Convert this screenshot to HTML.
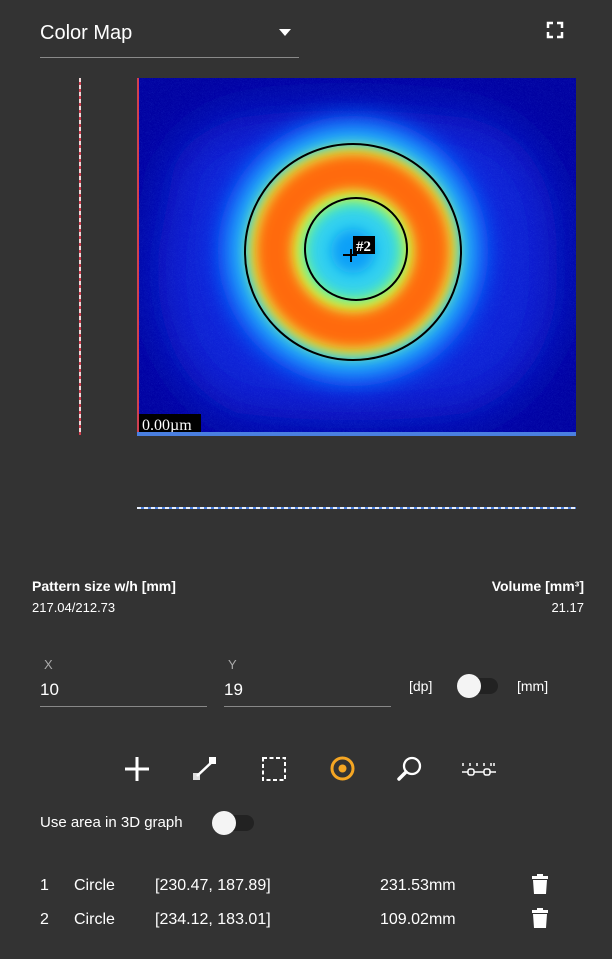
<!DOCTYPE html>
<html><head><meta charset="utf-8"><style>
body{margin:0;width:612px;height:959px;background:#333;font-family:"Liberation Sans",sans-serif;color:#fff;position:relative;overflow:hidden}
.a{position:absolute}
</style></head><body>
<div class="a" style="left:40px;top:22px;font-size:20px">Color Map</div>
<svg class="a" style="left:279px;top:29px" width="12" height="8"><path d="M0 0H12L6 7Z" fill="#fff"/></svg>
<div class="a" style="left:40px;top:57px;width:259px;height:1px;background:#8a8a8a"></div>
<svg class="a" style="left:546px;top:21px" width="18" height="18" fill="none" stroke="#fff" stroke-width="2.5"><path d="M2 7V2H7M11 2H16V7M16 11V16H11M7 16H2V11"/></svg>
<div class="a" style="left:79px;top:78px;width:2px;height:357px;background:repeating-linear-gradient(#f0dada 0 4px,#d04050 4px 7px)"></div>
<svg class="a" style="left:137px;top:78px" width="439" height="358">
<defs>
<filter id="b" x="-50%" y="-50%" width="200%" height="200%"><feGaussianBlur stdDeviation="12"/></filter>
<filter id="b2" x="-50%" y="-50%" width="200%" height="200%"><feGaussianBlur stdDeviation="25"/></filter>
<filter id="s" x="-50%" y="-50%" width="200%" height="200%"><feGaussianBlur stdDeviation="6"/></filter>
<filter id="n"><feTurbulence baseFrequency="0.9" numOctaves="1" seed="3"/><feColorMatrix values="0 0 0 0 0.1 0 0 0 0 0.3 0 0 0 0 1 0 0 0 0.5 0"/></filter>
</defs>
<rect width="439" height="358" fill="#0000a0"/>
<path d="M35 100 Q40 60 100 40 Q200 25 330 40 Q420 60 420 180 Q425 300 330 335 Q215 350 100 335 Q20 300 20 180Z" fill="#0a20d8" filter="url(#b2)"/>
<rect width="439" height="358" filter="url(#n)" opacity="0.45"/>
<circle cx="216" cy="173" r="135" fill="#1060ff" filter="url(#b)"/>
<circle cx="216" cy="173" r="118" fill="#30d8f0" filter="url(#b)"/>
<circle cx="216" cy="173" r="104" fill="#e8f030" filter="url(#s)"/>
<circle cx="216" cy="173" r="79" fill="none" stroke="#ff6a10" stroke-width="36" filter="url(#s)"/>
<circle cx="216" cy="173" r="52" fill="#60f0a0" filter="url(#s)"/>
<circle cx="216" cy="173" r="44" fill="#30d0f0" filter="url(#s)"/>
<circle cx="216" cy="173" r="22" fill="#10a0f8" filter="url(#s)"/>
<circle cx="216" cy="174" r="108" fill="none" stroke="#000" stroke-width="2"/>
<circle cx="219" cy="171" r="51" fill="none" stroke="#000" stroke-width="2"/>
<rect x="216" y="158" width="22" height="18" fill="#000"/>
<text x="219" y="173" font-family="Liberation Serif" font-weight="bold" font-size="15" fill="#fff">#2</text>
<path d="M206 177H220M214 171V184" stroke="#000" stroke-width="2"/>
<rect x="1" y="336" width="63" height="20" fill="#000"/>
<text x="5" y="352" font-family="Liberation Serif" font-size="16" fill="#fff">0.00µm</text>
<rect x="0" y="0" width="2" height="358" fill="#d04050"/>
<rect x="0" y="354" width="439" height="4" fill="#4a7fe0"/>
</svg>
<div class="a" style="left:137px;top:507px;width:439px;height:2px;background:repeating-linear-gradient(90deg,#e8f0ff 0 4px,#4a7fe0 4px 7px)"></div>
<div class="a" style="left:32px;top:578px;font-size:14px;font-weight:bold">Pattern size w/h [mm]</div>
<div class="a" style="left:32px;top:600px;font-size:13px">217.04/212.73</div>
<div class="a" style="right:28px;top:578px;font-size:14px;font-weight:bold">Volume [mm³]</div>
<div class="a" style="right:28px;top:600px;font-size:13px">21.17</div>
<div class="a" style="left:44px;top:657px;font-size:13px;color:#aaa">X</div>
<div class="a" style="left:40px;top:680px;font-size:17px">10</div>
<div class="a" style="left:40px;top:706px;width:167px;height:1px;background:#888"></div>
<div class="a" style="left:228px;top:657px;font-size:13px;color:#aaa">Y</div>
<div class="a" style="left:224px;top:680px;font-size:17px">19</div>
<div class="a" style="left:224px;top:706px;width:167px;height:1px;background:#888"></div>
<div class="a" style="left:409px;top:678px;font-size:14px">[dp]</div>
<div class="a" style="left:460px;top:678px;width:38px;height:16px;border-radius:8px;background:#222"></div>
<div class="a" style="left:457px;top:674px;width:24px;height:24px;border-radius:12px;background:#f4f4f4"></div>
<div class="a" style="left:517px;top:678px;font-size:14px">[mm]</div>
<svg class="a" style="left:124px;top:756px" width="26" height="26"><path d="M13 1V25M1 13H25" stroke="#fff" stroke-width="3"/></svg>
<svg class="a" style="left:192px;top:756px" width="26" height="26"><rect x="1" y="17" width="7" height="7" fill="#ddd"/><rect x="17" y="1" width="7" height="7" fill="#fff"/><path d="M5 20L21 5" stroke="#fff" stroke-width="2.5"/></svg>
<svg class="a" style="left:261px;top:756px" width="26" height="26"><rect x="2" y="2" width="22" height="22" fill="none" stroke="#fff" stroke-width="2" stroke-dasharray="4 2.5"/></svg>
<svg class="a" style="left:329px;top:755px" width="27" height="27"><circle cx="13.5" cy="13.5" r="10.5" fill="none" stroke="#f5a623" stroke-width="3"/><circle cx="13.5" cy="13.5" r="4" fill="#f5a623"/></svg>
<svg class="a" style="left:397px;top:755px" width="26" height="27"><circle cx="15" cy="11" r="8" fill="none" stroke="#fff" stroke-width="2.3"/><path d="M9 17L2 24" stroke="#fff" stroke-width="3.5" stroke-linecap="round"/></svg>
<svg class="a" style="left:462px;top:760px" width="34" height="18" fill="#fff"><path d="M1 3V6M8 3V6M15 3V6M22 3V6M29 3V6M32 3V6" stroke="#fff" stroke-width="1.5"/><path d="M0 12H34" stroke="#fff" stroke-width="1.5"/><rect x="6" y="9" width="6" height="6" rx="2" fill="#333" stroke="#fff" stroke-width="1.5"/><rect x="22" y="9" width="6" height="6" rx="2" fill="#333" stroke="#fff" stroke-width="1.5"/></svg>
<div class="a" style="left:40px;top:814px;font-size:15px">Use area in 3D graph</div>
<div class="a" style="left:216px;top:815px;width:38px;height:16px;border-radius:8px;background:#222"></div>
<div class="a" style="left:212px;top:811px;width:24px;height:24px;border-radius:12px;background:#f4f4f4"></div>
<div class="a" style="left:40px;top:877px;font-size:16px">1</div>
<div class="a" style="left:74px;top:877px;font-size:16px">Circle</div>
<div class="a" style="left:155px;top:877px;font-size:16px">[230.47, 187.89]</div>
<div class="a" style="left:380px;top:877px;font-size:16px">231.53mm</div>
<div class="a" style="left:40px;top:911px;font-size:16px">2</div>
<div class="a" style="left:74px;top:911px;font-size:16px">Circle</div>
<div class="a" style="left:155px;top:911px;font-size:16px">[234.12, 183.01]</div>
<div class="a" style="left:380px;top:911px;font-size:16px">109.02mm</div>
<svg class="a" style="left:531px;top:873px" width="18" height="22"><path d="M6 1H12V3H17V6H1V3H6Z M2 7H16L15 21H3Z" fill="#fff"/></svg>
<svg class="a" style="left:531px;top:907px" width="18" height="22"><path d="M6 1H12V3H17V6H1V3H6Z M2 7H16L15 21H3Z" fill="#fff"/></svg>
</body></html>
